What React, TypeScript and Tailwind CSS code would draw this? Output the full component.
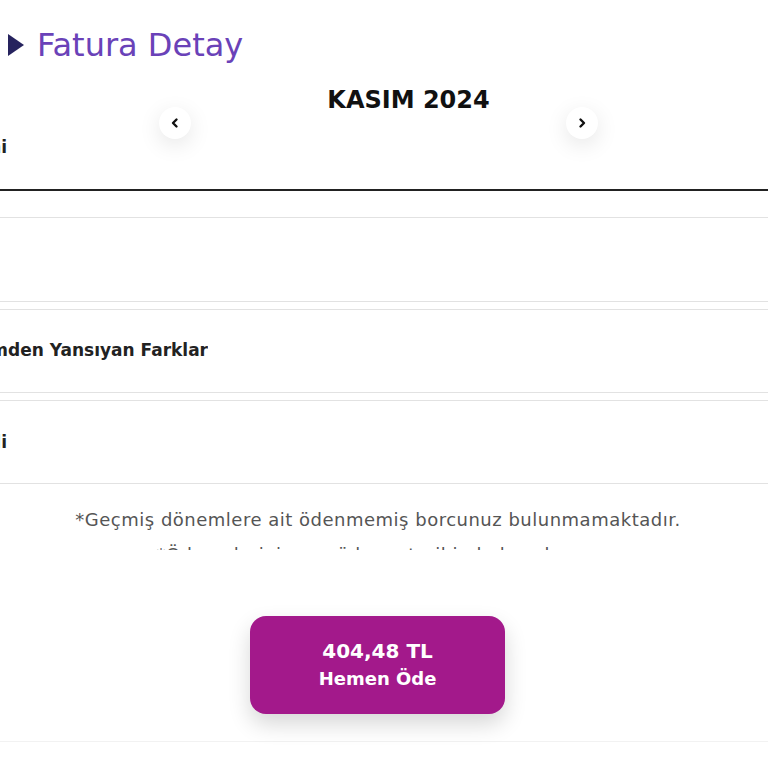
import React from "react";

const Chevron = ({ dir }: { dir: "left" | "right" }) => (
  <div className="w-[32px] h-[32px] rounded-full bg-white shadow-[0_6px_22px_rgba(0,0,0,0.10)] flex items-center justify-center shrink-0">
    <svg width="12" height="12" viewBox="0 0 12 12" fill="none">
      {dir === "left" ? (
        <path d="M7.5 2.5 L4 6 L7.5 9.5" stroke="#111" strokeWidth="2.4" strokeLinecap="round" strokeLinejoin="round" />
      ) : (
        <path d="M4.5 2.5 L8 6 L4.5 9.5" stroke="#111" strokeWidth="2.4" strokeLinecap="round" strokeLinejoin="round" />
      )}
    </svg>
  </div>
);

const Label = ({ text, w }: { text: string; w: string }) => (
  <div className={`${w} overflow-hidden flex justify-end whitespace-nowrap text-[17px] font-bold text-[#222] leading-[20px]`}>
    {text}
  </div>
);

export default function App() {
  return (
    <div className="w-[768px] h-[768px] overflow-hidden bg-white" style={{ fontFamily: '"DejaVu Sans", "Noto Sans", sans-serif' }}>
      {/* Title */}
      <div className="h-[88px] flex items-center pl-[8px] gap-[13px] pt-[2px]">
        <svg width="16" height="22" viewBox="0 0 16 22">
          <polygon points="0,0 16,11 0,22" fill="#26235e" />
        </svg>
        <span className="text-[32px] leading-[40px] text-[#6a42b8]">Fatura Detay</span>
      </div>

      {/* Month header */}
      <div className="h-[103px] border-b-2 border-[#222] flex flex-col">
        <div className="flex items-start">
          <div className="ml-[159px] mt-[19px]">
            <Chevron dir="left" />
          </div>
          <div className="flex-1 pl-[60px] text-center text-[24px] font-bold leading-[24px] text-[#111]">
            KASIM 2024
          </div>
          <div className="mr-[170px] mt-[19px]">
            <Chevron dir="right" />
          </div>
        </div>
        <div className="mt-[-2px]">
          <Label text="Fatura Dönemi" w="w-[7px]" />
        </div>
      </div>

      {/* Rows */}
      <div className="mt-[26px] flex flex-col gap-[7px]">
        <div className="h-[85px] border-y-[1.5px] border-[#e2e2e2]" />
        <div className="h-[84px] border-y-[1.5px] border-[#e2e2e2] flex items-center pb-[2px]">
          <Label text="Önceki Dönemden Yansıyan Farklar" w="w-[208px]" />
        </div>
        <div className="h-[84px] border-y-[1.5px] border-[#e2e2e2] flex items-center">
          <Label text="Toplam Gecikme Bedeli" w="w-[7px]" />
        </div>
      </div>

      {/* Footnote */}
      <div className="h-[66px] overflow-hidden pt-[20px] pr-[12px] text-center text-[18px] tracking-[0.5px] leading-[32px] text-[#555]">
        <div className="whitespace-nowrap">*Geçmiş dönemlere ait ödenmemiş borcunuz bulunmamaktadır.</div>
        <div className="whitespace-nowrap mt-[3px] pl-[70px]">*Ödemeleriniz son ödeme tarihinde hesabınıza yansır.</div>
      </div>

      {/* Pay button */}
      <div className="mt-[66px] flex justify-center pr-[13px]">
        <button className="w-[255px] h-[98px] rounded-[16px] bg-[#a3198b] shadow-[0_10px_22px_rgba(0,0,0,0.16)] flex flex-col items-center justify-center text-white font-bold">
          <span className="text-[20px] leading-[28px]">404,48 TL</span>
          <span className="text-[18px] leading-[28px]">Hemen Öde</span>
        </button>
      </div>

      <div className="mt-[27px] border-t border-[#f2f2f2]" />
    </div>
  );
}
